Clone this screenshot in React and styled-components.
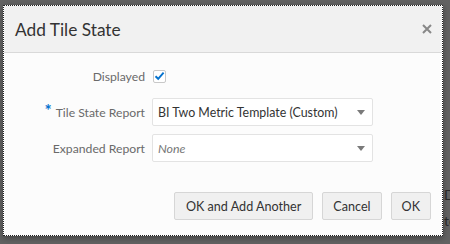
import React from 'react';
import styled, { createGlobalStyle } from 'styled-components';

const GlobalStyle = createGlobalStyle`
  html, body {
    margin: 0;
    padding: 0;
    width: 450px;
    height: 244px;
    overflow: hidden;
    background: #626262;
    font-family: Lato, "Open Sans", sans-serif;
  }
`;

const Page = styled.div`
  position: relative;
  width: 450px;
  height: 244px;
  background: #626262;
  overflow: hidden;
`;

const BackText = styled.div`
  position: absolute;
  left: 444px;
  top: ${p => p.top}px;
  font-size: 14px;
  color: #2a2a2a;
`;

const Dialog = styled.div`
  position: absolute;
  left: 3px;
  top: 5px;
  width: 440px;
  height: 231px;
  box-sizing: border-box;
  border: 1px dotted #222;
  background: #fcfcfc;
  box-shadow: 0 2px 6px rgba(0, 0, 0, 0.35);
  display: flex;
  flex-direction: column;
`;

const Header = styled.div`
  height: 46px;
  background: #f1f1f1;
  border-bottom: 1px solid #d9d9d9;
  display: flex;
  align-items: center;
  justify-content: space-between;
  padding: 0 9px 0 11px;
  flex-shrink: 0;
`;

const Title = styled.h1`
  margin: 0;
  font-size: 17.3px;
  font-weight: 400;
  color: #333;
`;

const Close = styled.button`
  border: 0;
  background: none;
  padding: 0;
  width: 12px;
  height: 12px;
  display: flex;
  align-items: center;
  justify-content: center;
`;

const Form = styled.div`
  display: grid;
  grid-template-columns: 141px 221px;
  column-gap: 7px;
  row-gap: 8px;
  padding-top: 9px;
  align-items: center;
`;

const Label = styled.label`
  height: 28px;
  display: flex;
  align-items: center;
  justify-content: flex-end;
  font-size: 12.2px;
  color: #6a6a6a;
  white-space: nowrap;
`;

const Required = styled.span`
  color: #0572ce;
  font-size: 17px;
  font-weight: 700;
  margin-right: 4px;
  align-self: flex-start;
  margin-top: 2px;
`;

const Check = styled.span`
  width: 13px;
  height: 13px;
  box-sizing: border-box;
  border: 1px solid #c8c8c8;
  border-radius: 2px;
  background: #fff;
  display: flex;
  align-items: center;
  justify-content: center;
  margin-left: 1px;
`;

const Select = styled.div`
  height: 28px;
  box-sizing: border-box;
  border: 1px solid #e3e3e3;
  border-radius: 2px;
  background: #fff;
  display: flex;
  align-items: center;
  justify-content: space-between;
  padding: 0 7px 0 5px;
  font-size: 12.4px;
  white-space: nowrap;
  color: ${p => (p.placeholder ? '#777' : '#333')};
  font-style: ${p => (p.placeholder ? 'italic' : 'normal')};
`;

const Arrow = styled.span`
  width: 0;
  height: 0;
  border-left: 4.5px solid transparent;
  border-right: 4.5px solid transparent;
  border-top: 5px solid #7a7a7a;
`;

const Footer = styled.div`
  margin-top: auto;
  display: flex;
  justify-content: flex-end;
  gap: 9px;
  padding: 0 11px 15px 0;
`;

const Button = styled.button`
  height: 28px;
  box-sizing: border-box;
  padding: 0 ${p => p.pad}px;
  border: 1px solid #d6d6d6;
  border-radius: 2px;
  background: #f0f0f0;
  font-family: inherit;
  font-size: 12.6px;
  color: #333;
`;

export default function App() {
  return (
    <Page>
      <GlobalStyle />
      <BackText top={186}>D</BackText>
      <BackText top={212}>te</BackText>
      <Dialog>
        <Header>
          <Title>Add Tile State</Title>
          <Close aria-label="Close">
            <svg width="10" height="10" viewBox="0 0 10 10">
              <path d="M1 1L9 9M9 1L1 9" stroke="#888" strokeWidth="2" />
            </svg>
          </Close>
        </Header>
        <Form>
          <Label>Displayed</Label>
          <div>
            <Check>
              <svg width="11" height="10" viewBox="0 0 11 10">
                <path d="M1.5 5.2L4.2 7.8L9.6 1.6" fill="none" stroke="#0572ce" strokeWidth="1.9" />
              </svg>
            </Check>
          </div>
          <Label>
            <Required>*</Required>Tile State Report
          </Label>
          <Select>
            BI Two Metric Template (Custom)
            <Arrow />
          </Select>
          <Label>Expanded Report</Label>
          <Select placeholder="1">
            None
            <Arrow />
          </Select>
        </Form>
        <Footer>
          <Button pad={11}>OK and Add Another</Button>
          <Button pad={10}>Cancel</Button>
          <Button pad={10}>OK</Button>
        </Footer>
      </Dialog>
    </Page>
  );
}
